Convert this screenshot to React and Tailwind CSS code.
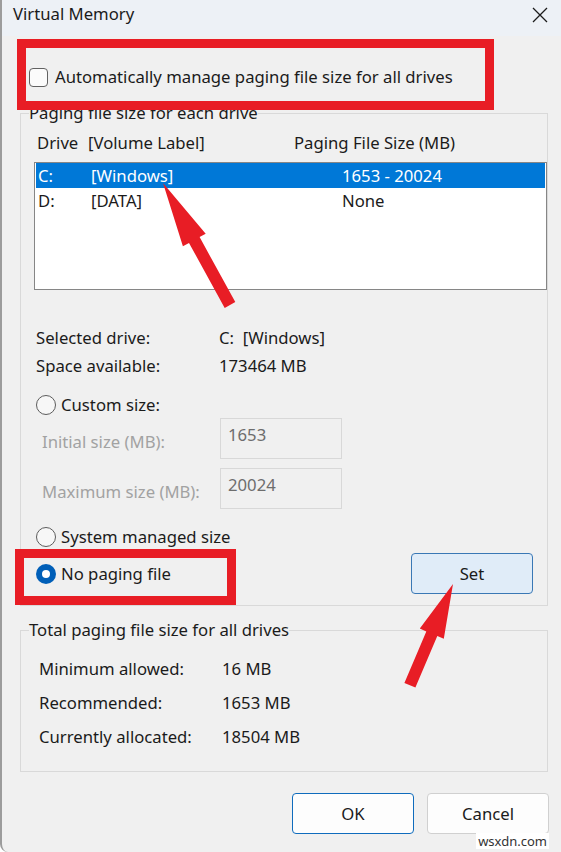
import React from 'react';

function Radio({ checked }) {
  if (checked) {
    return (
      <span className="w-[20px] h-[20px] rounded-full bg-[#005fb8] flex items-center justify-center shrink-0">
        <span className="w-[8px] h-[8px] rounded-full bg-white" />
      </span>
    );
  }
  return <span className="w-[20px] h-[20px] rounded-full border border-[#5c5c5c] bg-[#f7f7f7] shrink-0" />;
}

function SizeField({ label, value, top }) {
  return (
    <div className={`flex items-center pl-[8px] ${top}`}>
      <span className="w-[178px] mt-[7px] text-[#a2a2a2]">{label}</span>
      <div className="w-[122px] h-[41px] border border-[#d8d8d8] pl-[7px] pt-[4px] leading-[24px] text-[#6d6d6d]">{value}</div>
    </div>
  );
}

export default function App() {
  return (
    <div className="relative w-[561px] h-[852px] overflow-hidden bg-white font-['Noto_Sans',sans-serif] text-[16.7px] text-[#1b1b1b]">
      <div className="h-full bg-[#f0f0f0] border-l-2 border-[#9c9c9c] rounded-bl-[8px]">
        {/* title bar */}
        <div className="h-[36px] bg-[#edf1f6] flex items-start justify-between pl-[11px] pr-[13px]">
          <span className="leading-[28px]">Virtual Memory</span>
          <svg width="16" height="16" viewBox="0 0 16 16" className="mt-[7px]">
            <path d="M1 1 L15 15 M15 1 L1 15" stroke="#1b1b1b" strokeWidth="1.3" fill="none" />
          </svg>
        </div>

        <div className="pl-[18px] flex flex-col">
          <div className="mt-[31px] ml-[9px] h-[20px] flex items-center gap-[7px]">
            <span className="w-[19px] h-[19px] rounded-[4px] border border-[#616161] bg-[#fbfbfb]" />
            <span className="leading-[20px]">Automatically manage paging file size for all drives</span>
          </div>

          {/* paging file size for each drive */}
          <fieldset className="mt-[16px] w-[528px] border border-[#d9d9d9] pb-[11px]">
            <legend className="ml-[8px] leading-[20px]">Paging file size for each drive</legend>
            <div className="pl-[13px] flex flex-col leading-[20px]">
              <div className="mt-[10px] h-[20px] flex">
                <span className="ml-[3px] w-[51px]">Drive</span>
                <span className="w-[206px]">[Volume Label]</span>
                <span>Paging File Size (MB)</span>
              </div>
              <div className="mt-[9px] h-[128px] border border-[#868686] bg-white px-[1px]">
                <div className="h-[25px] bg-[#0078d7] text-white flex items-center">
                  <span className="pl-[2px] w-[55px]">C:</span>
                  <span className="w-[251px]">[Windows]</span>
                  <span>1653 - 20024</span>
                </div>
                <div className="h-[25px] flex items-center">
                  <span className="pl-[2px] w-[55px]">D:</span>
                  <span className="w-[251px]">[DATA]</span>
                  <span>None</span>
                </div>
              </div>

              <div className="mt-[34px] h-[28px] flex items-center pl-[2px]">
                <span className="w-[183px]">Selected drive:</span>
                <span className="whitespace-pre">C:  [Windows]</span>
              </div>
              <div className="h-[28px] flex items-center pl-[2px]">
                <span className="w-[183px]">Space available:</span>
                <span>173464 MB</span>
              </div>

              <div className="mt-[15px] h-[20px] flex items-center gap-[5px] pl-[2px]">
                <Radio />
                <span>Custom size:</span>
              </div>
              <SizeField label="Initial size (MB):" value="1653" top="mt-[3px]" />
              <SizeField label="Maximum size (MB):" value="20024" top="mt-[9px]" />

              <div className="mt-[18px] h-[20px] flex items-center gap-[5px] pl-[2px]">
                <Radio />
                <span>System managed size</span>
              </div>
              <div className="mt-[6px] h-[41px] flex items-center justify-between pr-[14px]">
                <div className="flex items-center gap-[5px] pl-[2px]">
                  <Radio checked />
                  <span>No paging file</span>
                </div>
                <button className="w-[122px] h-[41px] rounded-[4px] border border-[#3a78b5] bg-[#e0ecf8]">Set</button>
              </div>
            </div>
          </fieldset>

          {/* totals */}
          <fieldset className="mt-[14px] w-[528px] border border-[#d9d9d9] pb-[17px]">
            <legend className="ml-[8px] leading-[20px]">Total paging file size for all drives</legend>
            <div className="pl-[18px] mt-[12px] flex flex-col">
              {[
                ['Minimum allowed:', '16 MB'],
                ['Recommended:', '1653 MB'],
                ['Currently allocated:', '18504 MB'],
              ].map(([k, v]) => (
                <div key={k} className="h-[34px] flex items-center">
                  <span className="w-[183px]">{k}</span>
                  <span>{v}</span>
                </div>
              ))}
            </div>
          </fieldset>

          <div className="mt-[21px] flex justify-end gap-[13px] pr-[12px]">
            <button className="w-[122px] h-[41px] rounded-[4px] border border-[#0f6cbd] bg-[#fdfdfd]">OK</button>
            <button className="w-[122px] h-[41px] rounded-[4px] border border-[#d0d0d0] bg-[#fdfdfd]">Cancel</button>
          </div>
        </div>
      </div>

      {/* annotations */}
      <div className="absolute left-[17px] top-[39px] w-[477px] h-[71px] border-[9px] border-[#e81d25]" />
      <div className="absolute left-[15px] top-[549px] w-[221px] h-[56px] border-[9px] border-[#e81d25]" />
      <svg className="absolute inset-0 pointer-events-none" width="561" height="852">
        <polygon fill="#e81d25" points="163,183 205.7,233.7 199.6,237.1 235.3,302.1 224.7,307.9 189,242.9 182.9,246.3" />
        <polygon fill="#e81d25" points="453,584 443.8,638.8 437.3,636.1 415.4,687.6 404.4,682.9 426.3,631.4 419.8,628.6" />
      </svg>
      <span className="absolute right-[12px] bottom-[3px] bg-white px-[2px] text-[13px] leading-[16px] text-[#333]">wsxdn.com</span>
    </div>
  );
}
